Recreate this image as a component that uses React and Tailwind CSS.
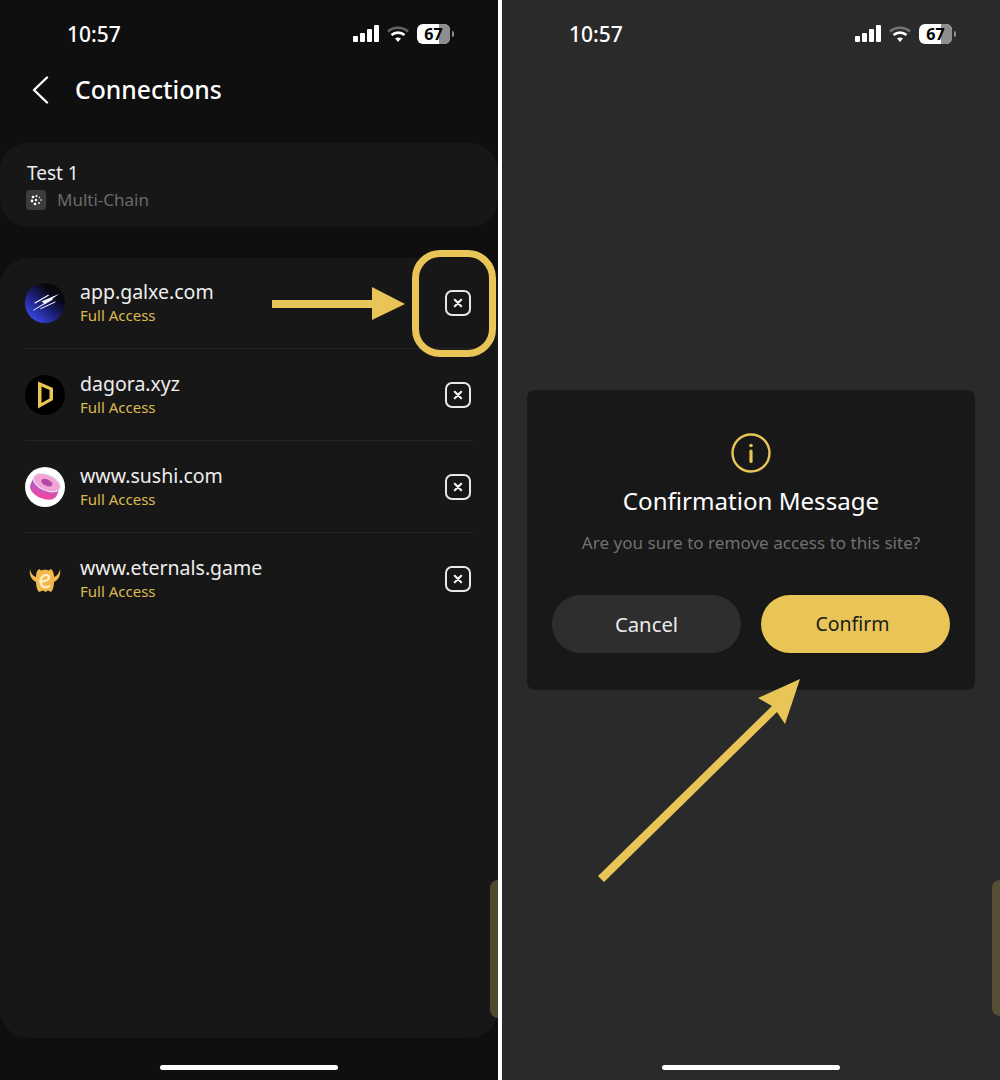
import React from "react";

const YELLOW = "#e8c556";

function StatusBar({ time }) {
  return (
    <div className="flex h-[68px] items-center justify-between pl-[67px] pr-[44px]">
      <span className="text-[21px] font-medium leading-none text-white">{time}</span>
      <div className="flex items-center gap-[8px]">
        <svg width="26" height="18" viewBox="0 0 26 18" fill="#fff">
          <rect x="0" y="11" width="5" height="6" rx="1" />
          <rect x="7" y="8" width="5" height="9" rx="1" />
          <rect x="14" y="4" width="5" height="13" rx="1" />
          <rect x="21" y="0" width="5" height="17" rx="1" />
        </svg>
        <svg width="22" height="18" viewBox="0 0 22 18" fill="none" strokeLinecap="butt">
          <path d="M1 6.500C6.500 1.500 15.500 1.500 21 6.500" stroke="#fff" strokeOpacity="0.35" strokeWidth="2.600" />
          <path d="M4.500 10C8.200 6.800 13.800 6.800 17.500 10" stroke="#fff" strokeWidth="2.600" />
          <path d="M8 13.500C9.800 12.200 12.200 12.200 14 13.500L11 17Z" fill="#fff" />
        </svg>
        <div className="relative flex h-[20px] w-[33px] items-center justify-center overflow-hidden rounded-[6px] bg-white">
          <div className="absolute inset-y-0 right-0 w-[11px] bg-[#8e8e8e]" />
          <span className="relative text-[16px] font-bold leading-none text-black">67</span>
        </div>
        <div className="-ml-[6px] h-[6px] w-[2px] rounded-r-sm bg-[#8e8e8e]" />
      </div>
    </div>
  );
}

function CloseBox() {
  return (
    <div className="mr-[2px] flex h-[26px] w-[26px] items-center justify-center rounded-[7px] border-2 border-[#e8e8e8]">
      <svg width="10" height="10" viewBox="0 0 10 10" stroke="#f2f2f2" strokeWidth="2.200" strokeLinecap="round">
        <path d="M1.800 1.800L8.200 8.200M8.200 1.800L1.800 8.200" />
      </svg>
    </div>
  );
}

function GalxeIcon() {
  return (
    <svg width="40" height="40" viewBox="0 0 40 40">
      <defs>
        <linearGradient id="galxe" x1="0.15" y1="0.9" x2="0.7" y2="0.25">
          <stop offset="0" stopColor="#3a48e6" />
          <stop offset="0.55" stopColor="#1b1f78" />
          <stop offset="1" stopColor="#07070f" />
        </linearGradient>
      </defs>
      <circle cx="20" cy="20" r="20" fill="url(#galxe)" />
      <path d="M16.500 18.500L34.300 10.700L20 21Z" fill="#fff" />
      <path d="M10 20L23.300 12.300" stroke="#fff" strokeWidth="1.100" strokeLinecap="round" />
      <path d="M8.300 27.300L26.700 15.700L27.500 16.500Z" fill="#fff" stroke="#fff" strokeWidth="0.500" />
      <path d="M15.700 25.700L30 19" stroke="#fff" strokeWidth="1" strokeLinecap="round" />
    </svg>
  );
}

function DagoraIcon() {
  return (
    <svg width="40" height="40" viewBox="0 0 40 40">
      <circle cx="20" cy="20" r="20" fill="#000" />
      <path d="M13 6.500L28 13V25L13 33.500Z M16.500 11.500V28L24.500 23.500V15Z" fill={YELLOW} fillRule="evenodd" />
    </svg>
  );
}

function SushiIcon() {
  return (
    <svg width="40" height="40" viewBox="0 0 40 40">
      <defs>
        <linearGradient id="sushi" x1="0.1" y1="0" x2="0.6" y2="1">
          <stop offset="0" stopColor="#a860d8" />
          <stop offset="1" stopColor="#f2479b" />
        </linearGradient>
      </defs>
      <circle cx="20" cy="20" r="20" fill="#fff" />
      <g transform="rotate(24 20 20) translate(1.500 1.500) scale(0.92)">
        <path d="M4.500 16V24C4.500 29 11.500 33 20 33S35.500 29 35.500 24V16Z" fill="url(#sushi)" />
        <ellipse cx="20" cy="15" rx="15.500" ry="8.500" fill="#f4a4d2" />
        <ellipse cx="20" cy="15" rx="15.500" ry="8.500" fill="none" stroke="#d9eaf5" strokeWidth="1.200" />
        <ellipse cx="20" cy="15" rx="6.500" ry="3.500" fill="#b04aa8" />
      </g>
    </svg>
  );
}

function EternalsIcon() {
  return (
    <svg width="40" height="40" viewBox="0 0 40 40">
      <path
        d="M5 10C5.500 14 8 17 11 18C11 14 12 11 14.500 10L16 11.500C18 10.500 22 10.500 24 11.500L25.500 10C28 11 29 14 29 18C32 17 34.500 14 35 10C36 15 34 21 29 23C29 27 28 31 26 33L23 31.500L20.500 33L18 31.500L14 33C12 31 11 27 11 23C6 21 4 15 5 10Z"
        fill="#f2b94b"
      />
      <path
        d="M15 22C18 23 24 21.500 24 18.500C24 15.500 19.500 15 17 18C14.500 21 15.500 27 19 28C21 28.500 23 28 24 27"
        fill="none"
        stroke="#ffeec8"
        strokeWidth="2.200"
        strokeLinecap="round"
      />
    </svg>
  );
}

const sites = [
  { name: "app.galxe.com", icon: <GalxeIcon /> },
  { name: "dagora.xyz", icon: <DagoraIcon /> },
  { name: "www.sushi.com", icon: <SushiIcon /> },
  { name: "www.eternals.game", icon: <EternalsIcon /> },
];

function HomeBar() {
  return <div className="mx-auto h-[5px] w-[178px] rounded-full bg-white" />;
}

function ConnectionsScreen() {
  return (
    <div className="relative h-[1080px] w-[498px] shrink-0 overflow-hidden bg-[#0f0f0f]">
      <StatusBar time="10:57" />
      {/* Header */}
      <div className="flex h-[44px] items-center pl-[31px]">
        <svg width="18" height="28" viewBox="0 0 18 28" fill="none" stroke="#fff" strokeWidth="2.400" strokeLinecap="round" strokeLinejoin="round">
          <path d="M16 1.500L3 14L16 26.500" />
        </svg>
        <h1 className="ml-[26px] text-[24.700px] font-medium leading-none text-white">Connections</h1>
      </div>

      {/* Account card */}
      <div className="mt-[31px] flex h-[84px] flex-col justify-center rounded-[28px] bg-[#171717] pl-[26px] pt-[1px]">
        <div className="pl-[1px] text-[19px] leading-[26px] text-[#ececec]">Test 1</div>
        <div className="mt-[2px] flex items-center gap-[11px]">
          <div className="flex h-[20px] w-[20px] items-center justify-center rounded-[4px] bg-[#3c3c3c]">
            <svg width="14" height="14" viewBox="0 0 14 14" fill="#fff">
              <circle cx="4" cy="4" r="1.300" />
              <circle cx="7.500" cy="3" r="1.100" />
              <circle cx="3" cy="8" r="1.400" />
              <circle cx="6" cy="11" r="1.300" />
              <circle cx="10" cy="10" r="0.900" />
              <circle cx="12" cy="7" r="0.800" />
              <circle cx="10.500" cy="4.500" r="0.700" />
              <circle cx="7" cy="7" r="1.200" />
            </svg>
          </div>
          <span className="text-[17px] leading-[24px] text-[#6a6a6a]">Multi-Chain</span>
        </div>
      </div>

      {/* Site list */}
      <div className="mt-[31px] h-[780px] rounded-[28px] bg-[#171717] px-[25px]">
        {sites.map((site, i) => (
          <div
            key={site.name}
            className={`flex items-center justify-between border-b ${i === 0 ? "h-[91px]" : "h-[92px]"} ${i < sites.length - 1 ? "border-[#252525]" : "border-transparent"}`}
          >
            <div className="flex items-center gap-[15px]">
              <div className="h-[40px] w-[40px]">{site.icon}</div>
              <div className="pb-[2px]">
                <div className="text-[19.500px] leading-[26px] text-[#eeeeee]">{site.name}</div>
                <div className="text-[15px] leading-[20px] text-[#dcb94f]">Full Access</div>
              </div>
            </div>
            <CloseBox />
          </div>
        ))}
      </div>

      <div className="mt-[27px]">
        <HomeBar />
      </div>

      {/* Floating tab peeking in from the edge */}
      <div className="absolute right-0 top-[880px] h-[138px] w-[8px] rounded-l-[14px] bg-[#4f4a2d]" />

      {/* Annotation */}
      <div className="absolute left-[412px] top-[250px] h-[107px] w-[84px] rounded-[28px] border-[7px] border-[#e8c556]" />
      <svg className="absolute left-[272px] top-[287px]" width="134" height="34" viewBox="0 0 134 34" fill={YELLOW}>
        <path d="M0 13H100V0L133 17L100 33V21H0Z" />
      </svg>
    </div>
  );
}

function ConfirmScreen() {
  return (
    <div className="relative h-[1080px] w-[498px] shrink-0 overflow-hidden bg-[#2a2a2a]">
      <StatusBar time="10:57" />

      {/* Floating tab, dimmed by the overlay */}
      <div className="absolute right-0 top-[880px] h-[136px] w-[8px] rounded-l-[14px] bg-[#574f35]" />

      {/* Dialog */}
      <div className="ml-[25px] mt-[322px] flex h-[300px] w-[448px] flex-col items-center rounded-[8px] bg-[#181818] px-[25px] pt-[43px]">
        <svg width="40" height="40" viewBox="0 0 40 40" fill="none" stroke={YELLOW} strokeWidth="2.400">
          <circle cx="20" cy="20" r="18.500" />
          <circle cx="20" cy="12.500" r="1.800" fill={YELLOW} stroke="none" />
          <path d="M20 18V28.500" strokeWidth="3.200" strokeLinecap="round" />
        </svg>
        <h2 className="mt-[12px] text-[24.100px] leading-[32px] text-white">Confirmation Message</h2>
        <p className="mt-[14px] whitespace-nowrap text-[17.100px] leading-[24px] text-[#707070]">Are you sure to remove access to this site?</p>
        <div className="mt-[40px] flex w-full gap-[20px]">
          <button className="h-[58px] w-[189px] rounded-full bg-[#2e2e2e] text-[20.300px] text-[#ececec]">Cancel</button>
          <button className="h-[58px] w-[189px] rounded-full bg-[#e8c556] pr-[6px] text-[19.500px] text-[#1b1b1b]">Confirm</button>
        </div>
      </div>

      <div className="mt-[375px]">
        <HomeBar />
      </div>

      {/* Annotation */}
      <svg className="absolute left-[94px] top-[676px]" width="210" height="208" viewBox="0 0 210 208" fill={YELLOW}>
        <path d="M8 206L2 200L176 30L162 22L204 3L189 48L181 36Z" />
      </svg>
    </div>
  );
}

export default function App() {
  return (
    <div className="flex h-[1080px] w-[1000px] justify-between overflow-hidden bg-white font-['Noto_Sans',sans-serif]">
      <ConnectionsScreen />
      <ConfirmScreen />
    </div>
  );
}
